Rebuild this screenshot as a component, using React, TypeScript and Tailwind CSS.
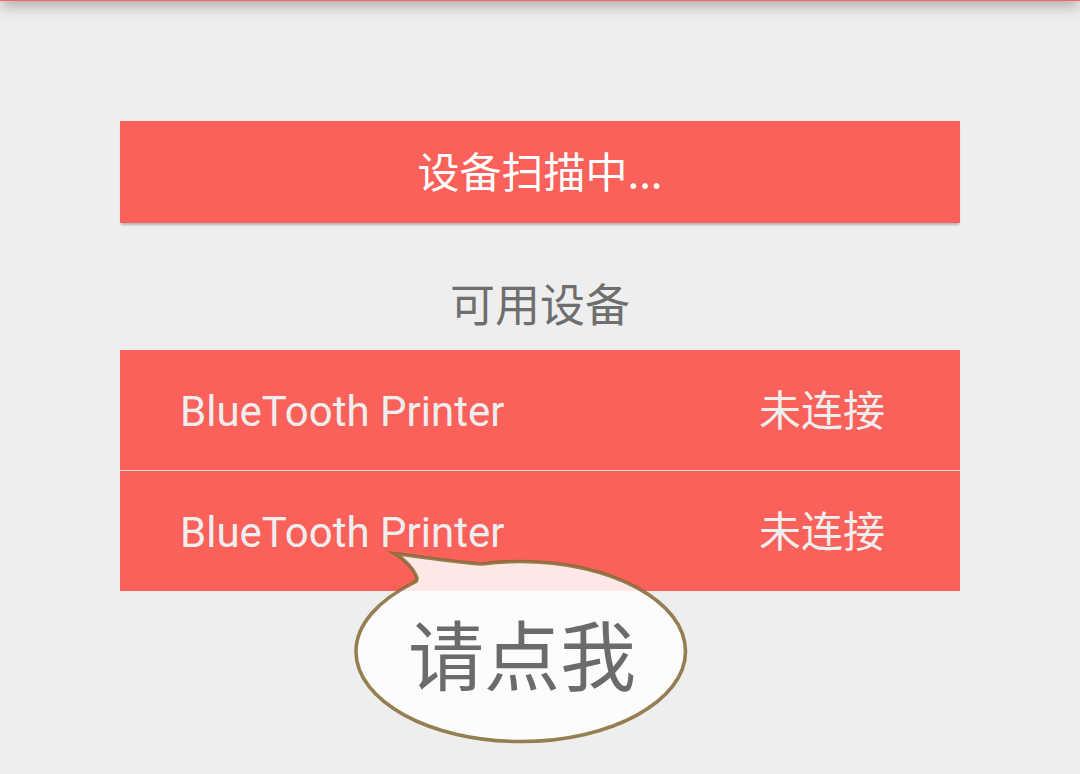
const devices = [
  { id: 1, name: 'BlueTooth Printer', status: '未连接' },
  { id: 2, name: 'BlueTooth Printer', status: '未连接' },
];

const bubbleOutline =
  'M43 5.800 C70 9 104 14 130 16 C145 14 155 13.500 168 13.500 C259 13.500 333.500 53 333.500 103.500 C333.500 153 259 193.500 169 193.500 C78 193.500 4 153 4 103.500 C4 76 27 52 62 34.500 C65 33.500 65.500 31.500 64.500 28.500 C61 20 53 12 43 5.800 Z';

function HintBubble() {
  return (
    <button
      type="button"
      className="absolute left-[232px] top-[198px] flex h-[200px] w-[340px] items-center justify-center"
    >
      <svg
        viewBox="0 0 340 200"
        className="absolute inset-0 h-full w-full"
        fill="none"
        aria-hidden="true"
      >
        <path d={bubbleOutline} fill="#fefefe" fillOpacity="0.86" />
        <path
          d={bubbleOutline}
          stroke="#846a37"
          strokeOpacity="0.86"
          strokeWidth="3.600"
          strokeMiterlimit="8"
        />
      </svg>
      <span className="relative pt-[22px] text-[76px] leading-none text-[#6b6b6b]">请点我</span>
    </button>
  );
}

export default function App() {
  return (
    <div className="flex min-h-screen flex-col overflow-hidden bg-[#eeeeee] font-['Roboto','Noto_Sans_CJK_SC',sans-serif]">
      <header className="-mt-[55px] h-14 shrink-0 bg-[#ff625c] shadow-[0_6px_14px_-1px_rgba(0,0,0,0.28)]" />
      <main className="px-[120px] pt-[120px]">
        <button
          type="button"
          className="block h-[102px] w-full bg-[#fa615a] pb-1 font-['Noto_Sans_CJK_SC',sans-serif] text-[42px] leading-none text-white shadow-[0_3px_2px_-1px_rgba(0,0,0,0.24)]"
        >
          设备扫描中...
        </button>
        <h1 className="pt-[52px] text-center text-[45px] leading-[64px] text-[#6e6e6e]">可用设备</h1>
        <section className="relative mt-[11px]">
          <ul className="divide-y divide-[#e6dede]">
            {devices.map((device) => (
              <li
                key={device.id}
                className="flex h-[121px] items-center justify-between bg-[#fa615a] bg-clip-padding pl-[60px] pr-[75px] pt-1 text-[42px] leading-none text-[#eeeeee] last:h-[120px]"
              >
                <span>{device.name}</span>
                <span>{device.status}</span>
              </li>
            ))}
          </ul>
          <HintBubble />
        </section>
      </main>
    </div>
  );
}
